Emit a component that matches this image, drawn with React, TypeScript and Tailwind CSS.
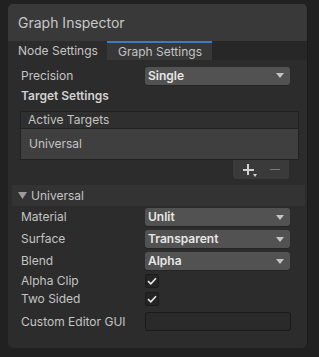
import { ReactNode } from "react";

const LABEL = "text-[12px] text-[#c4c4c4]";

function Arrow() {
  return (
    <svg width="8" height="5" viewBox="0 0 8 5" className="shrink-0">
      <path d="M0 0 L8 0 L4 5 Z" fill="#c4c4c4" />
    </svg>
  );
}

function Row({ label, children, className = "" }: { label: string; children: ReactNode; className?: string }) {
  return (
    <div className={`flex items-center ${className}`}>
      <div className={`w-[137px] shrink-0 pl-[13px] ${LABEL}`}>{label}</div>
      {children}
    </div>
  );
}

function Dropdown({ value }: { value: string }) {
  return (
    <div className="flex h-[18px] w-[145px] items-center justify-between rounded-[3px] bg-[#525252] pl-[3px] pr-[6px] shadow-[0_1px_0_#242424]">
      <span className="text-[12px] font-semibold text-[#e6e6e6]">{value}</span>
      <Arrow />
    </div>
  );
}

function Check() {
  return (
    <div className="flex h-[14px] w-[14px] items-center justify-center rounded-[2px] border border-[#1b1b1b] bg-[#242424]">
      <svg width="10" height="8" viewBox="0 0 10 8">
        <path d="M1 4.2 L3.8 6.8 L9 1.2" fill="none" stroke="#e8e8e8" strokeWidth="1.6" />
      </svg>
    </div>
  );
}

export default function App() {
  return (
    <div className="h-[357px] w-[319px] bg-[#212121] pl-[8px] pt-[4px]" style={{ fontFamily: "Inter, 'Noto Sans', sans-serif" }}>
      <div className="flex h-[344px] w-[300px] flex-col overflow-hidden rounded-[5px] bg-[#2c2c2c] border-r border-[#1a1a1a]">
        <div className="flex h-[37px] shrink-0 items-center bg-[#393939] pl-[10px] text-[14px] text-[#c8c8c8]">
          Graph Inspector
        </div>
        <div className="flex h-[19px] shrink-0 bg-[#272727]">
          <div className="flex w-[99px] items-center bg-[#2c2c2c] pl-[10px] text-[12px] text-[#c4c4c4]">
            Node Settings
          </div>
          <div className="flex w-[105px] items-center border-t-2 border-[#3d7cc0] bg-[#383838] pl-[11px] text-[12px] text-[#c4c4c4]">
            Graph Settings
          </div>
        </div>

        <Row label="Precision" className="mt-[6px] h-[19px]">
          <Dropdown value="Single" />
        </Row>
        <div className="flex h-[21px] items-center pl-[13px] text-[12px] font-semibold text-[#d2d2d2]">
          Target Settings
        </div>

        <div className="ml-[12px] mt-[5px] w-[279px]">
          <div className="flex h-[18px] items-center border border-[#212121] bg-[#2f2f2f] pl-[7px] text-[12px] text-[#c4c4c4]">
            Active Targets
          </div>
          <div className="flex h-[31px] items-center border-x border-b border-[#212121] bg-[#3f3f3f] pl-[8px] text-[12px] text-[#c4c4c4]">
            Universal
          </div>
          <div className="flex justify-end pr-[10px]">
            <div className="flex h-[19px] w-[56px] items-center justify-center gap-[16px] rounded-b-[3px] bg-[#3a3a3a]">
              <div className="relative h-[11px] w-[11px]">
                <div className="absolute left-0 top-[5px] h-[2px] w-[11px] bg-[#d0d0d0]" />
                <div className="absolute left-[4.5px] top-0 h-[11px] w-[2px] bg-[#d0d0d0]" />
                <div className="absolute left-[10px] top-[10px] h-0 w-0 border-x-[2.5px] border-t-[3px] border-x-transparent border-t-[#d0d0d0]" />
              </div>
              <div className="h-[1.5px] w-[10px] bg-[#7a7a7a]" />
            </div>
          </div>
        </div>

        <div className="ml-[4px] mr-[2px] mt-[6px] flex h-[21px] items-center bg-[#333333] pl-[6px] text-[12px] text-[#c4c4c4]">
          <svg width="9" height="7" viewBox="0 0 9 7" className="mr-[4px]">
            <path d="M0 0 L9 0 L4.5 7 Z" fill="#9a9a9a" />
          </svg>
          Universal
        </div>

        <Row label="Material" className="mt-[2px] h-[18px]">
          <Dropdown value="Unlit" />
        </Row>
        <Row label="Surface" className="mt-[4px] h-[18px]">
          <Dropdown value="Transparent" />
        </Row>
        <Row label="Blend" className="mt-[4px] h-[18px]">
          <Dropdown value="Alpha" />
        </Row>
        <Row label="Alpha Clip" className="mt-[4px] h-[14px]">
          <Check />
        </Row>
        <Row label="Two Sided" className="mt-[4px] h-[14px]">
          <Check />
        </Row>
        <Row label="Custom Editor GUI" className="mt-[6px] h-[19px]">
          <div className="h-[19px] w-[146px] rounded-[3px] border border-[#1a1a1a] bg-[#2a2a2a]" />
        </Row>
      </div>
    </div>
  );
}
